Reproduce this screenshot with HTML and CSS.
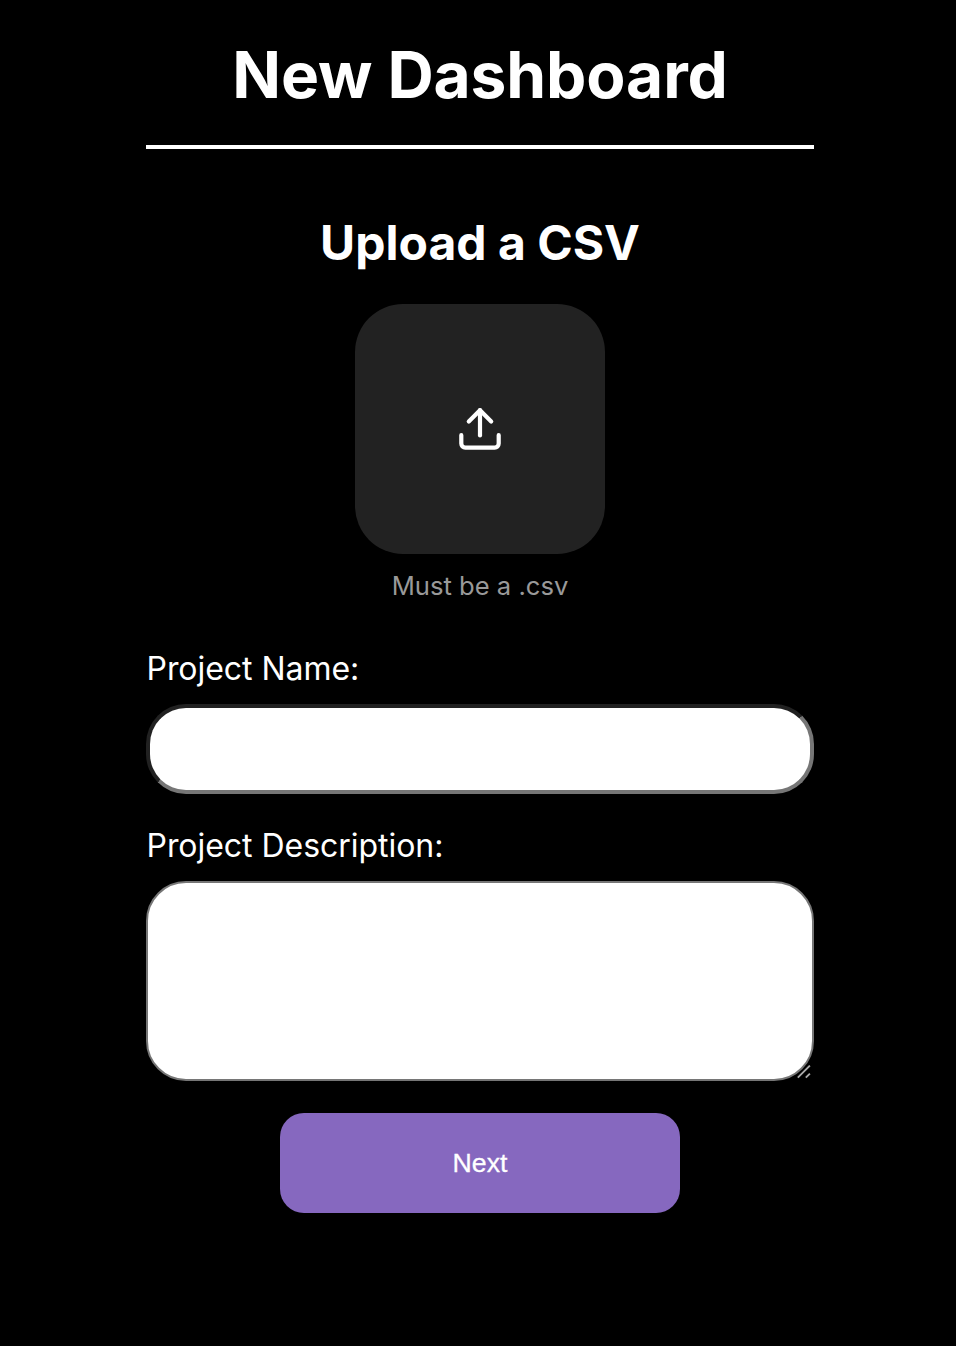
FILE: index.html
```
<!DOCTYPE html>
<html lang="en">
<head>
<meta charset="utf-8">
<title>New Dashboard</title>
<link rel="stylesheet" href="styles.css">
</head>
<body>
<main class="page">
  <h1 class="title">New Dashboard</h1>
  <form class="form">
    <h2 class="subtitle">Upload a CSV</h2>
    <div class="dropzone">
      <svg class="upload-icon" viewBox="0 0 48 48" fill="none" stroke="currentColor" stroke-width="4.2" stroke-linecap="round" stroke-linejoin="round">
        <path d="M5.3 30.2v8.4a4 4 0 0 0 4 4h29.4a4 4 0 0 0 4-4v-8.4"/>
        <path d="M24 5.2v25.3"/>
        <path d="M12.8 16.4L24 5.2l11.2 11.2"/>
      </svg>
    </div>
    <p class="hint">Must be a .csv</p>
    <label class="label" for="name">Project Name:</label>
    <input class="field name" id="name" type="text">
    <label class="label" for="description">Project Description:</label>
    <div class="description-wrap">
      <textarea class="field description" id="description"></textarea>
      <svg class="grip" viewBox="0 0 14 14" fill="none" stroke="currentColor" stroke-width="1.9">
        <path d="M0.8 12.7L12.9 0.6M8.8 12.7L12.9 8.6"/>
      </svg>
    </div>
    <button class="next" type="button">Next</button>
  </form>
</main>
</body>
</html>
```
FILE: styles.css
```
* { box-sizing: border-box; }
body {
  margin: 0;
  min-height: 1346px;
  background: #000;
  color: #fff;
  font-family: Inter, sans-serif;
}
.page { width: 668px; margin-left: 146px; }
.title {
  height: 149px;
  margin: 0;
  padding-top: 35px;
  border-bottom: 4px solid #fff;
  font-size: 64px;
  line-height: 80px;
  font-weight: 700;
  letter-spacing: -0.1px;
  text-align: center;
  white-space: nowrap;
}
.form { display: flex; flex-direction: column; }
.subtitle {
  margin: 64px 0 31px;
  font-size: 48px;
  line-height: 60px;
  font-weight: 700;
  text-align: center;
}
.dropzone {
  display: grid;
  place-items: center;
  align-self: center;
  width: 250px;
  height: 250px;
  border-radius: 48px;
  background: #222;
}
.upload-icon { width: 48px; height: 48px; }
.hint {
  margin: 16px 0 0;
  font-size: 25.6px;
  line-height: 32px;
  text-align: center;
  color: #999;
}
.label {
  margin-top: 47px;
  padding-left: 0.5px;
  font-size: 32px;
  line-height: 40px;
  letter-spacing: -0.04px;
}
.field { display: block; width: 100%; background: #fff; border-radius: 40px; outline: none; }
.name { height: 90px; margin-top: 15px; border: 4px inset #767676; }
.name + .label { margin-top: 32px; }
.description-wrap { position: relative; margin-top: 15px; }
.description { height: 200px; border: 2px solid #767676; resize: none; }
.grip {
  position: absolute;
  right: 3px;
  bottom: 2px;
  width: 14px;
  height: 14px;
  color: #aaa;
}
.next {
  align-self: center;
  width: 400px;
  height: 100px;
  margin-top: 32px;
  padding: 0;
  border: 0;
  border-radius: 24px;
  background: #8668bf;
  color: #fff;
  font: 400 26.67px "Liberation Sans", Arial, sans-serif;
  -webkit-text-stroke: 0.3px #fff;
}
```
